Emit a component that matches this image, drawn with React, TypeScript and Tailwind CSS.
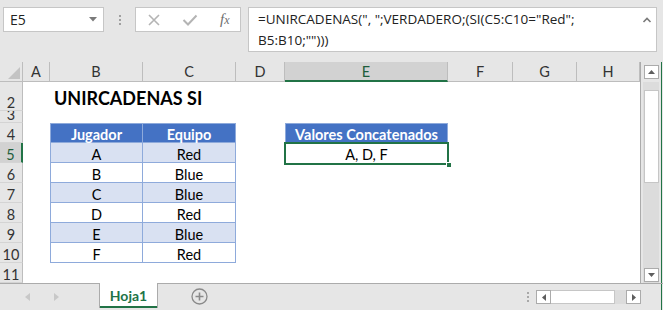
import React from 'react';

const cellFont = { fontFamily: 'Lato, "Open Sans", sans-serif' };
const uiFont = { fontFamily: '"Open Sans", "Noto Sans", sans-serif' };

const colHeaders = [
  { label: 'A', cls: 'col-start-2', active: false },
  { label: 'B', cls: 'col-start-3', active: false },
  { label: 'C', cls: 'col-start-4', active: false },
  { label: 'D', cls: 'col-start-5', active: false },
  { label: 'E', cls: 'col-start-6', active: true },
  { label: 'F', cls: 'col-start-7', active: false },
  { label: 'G', cls: 'col-start-8', active: false },
  { label: 'H', cls: 'col-start-9', active: false },
];

const rowHeaders = [
  { label: '2', cls: 'row-start-2', active: false },
  { label: '3', cls: 'row-start-3', active: false },
  { label: '4', cls: 'row-start-4', active: false },
  { label: '5', cls: 'row-start-5', active: true },
  { label: '6', cls: 'row-start-6', active: false },
  { label: '7', cls: 'row-start-7', active: false },
  { label: '8', cls: 'row-start-8', active: false },
  { label: '9', cls: 'row-start-9', active: false },
  { label: '10', cls: 'row-start-10', active: false },
  { label: '11', cls: 'row-start-11', active: false },
];

const tableRows = [
  { jugador: 'A', equipo: 'Red', row: 'row-start-5', band: true },
  { jugador: 'B', equipo: 'Blue', row: 'row-start-6', band: false },
  { jugador: 'C', equipo: 'Blue', row: 'row-start-7', band: true },
  { jugador: 'D', equipo: 'Red', row: 'row-start-8', band: false },
  { jugador: 'E', equipo: 'Blue', row: 'row-start-9', band: true },
  { jugador: 'F', equipo: 'Red', row: 'row-start-10', band: false },
];

const FormulaBar = () => (
  <div className="h-[62px] flex items-start pt-[7px] pl-[3px] bg-[#e6e6e6]" style={uiFont}>
    <div className="w-[101px] h-[25px] bg-white border border-[#c6c6c6] flex items-center justify-between pl-[6px] pr-[6px] text-[14px] text-[#222]">
      <span>E5</span>
      <svg width="8" height="5" viewBox="0 0 8 5">
        <path d="M0 0 L8 0 L4 4.5 Z" fill="#7a7a7a" />
      </svg>
    </div>
    <div className="w-[31px] h-[25px] flex flex-col items-center justify-center gap-[2px]">
      <span className="w-[2px] h-[2px] bg-[#a0a0a0]" />
      <span className="w-[2px] h-[2px] bg-[#a0a0a0]" />
      <span className="w-[2px] h-[2px] bg-[#a0a0a0]" />
    </div>
    <div className="w-[106px] h-[25px] bg-white border border-[#c6c6c6] flex items-center pl-[10px]">
      <svg width="14" height="14" viewBox="0 0 14 14" className="ml-[1px]">
        <path d="M2 2 L12 12 M12 2 L2 12" stroke="#b4b4b4" strokeWidth="1.6" />
      </svg>
      <svg width="16" height="14" viewBox="0 0 16 14" className="ml-[21px]">
        <path d="M1.5 7 L6 11.5 L14.5 2.5" stroke="#b4b4b4" strokeWidth="2" fill="none" />
      </svg>
      <span className="ml-[22px] text-[15px] italic text-[#6e6e6e] leading-none" style={{ fontFamily: '"Liberation Serif", serif' }}>
        f<span className="text-[12px]">x</span>
      </span>
    </div>
    <div className="ml-[7px] w-[409px] h-[45px] bg-white border border-[#c6c6c6] flex justify-between pl-[9px] pr-[4px] pt-[1px]">
      <div className="text-[13.5px] leading-[20.5px] text-[#222]">
        <div>=UNIRCADENAS(", ";VERDADERO;(SI(C5:C10="Red";</div>
        <div>B5:B10;"")))</div>
      </div>
      <svg width="10" height="8" viewBox="0 0 10 8" className="mt-[7px]">
        <path d="M1.5 6 L5 2.5 L8.5 6" stroke="#7a7a7a" strokeWidth="1.6" fill="none" />
      </svg>
    </div>
  </div>
);

const Sheet = () => (
  <div className="w-[641px] border-r border-[#ababab] bg-white" style={cellFont}>
    <div className="grid grid-cols-[23px_27px_93px_93px_49px_163px_65px_64px_63px] grid-rows-[20px_29px_12px_20px_20px_20px_20px_20px_20px_20px_20px] text-[14.5px] text-black">
      <div className="col-start-1 row-start-1 bg-[#e6e6e6] border-r border-b border-[#bdbdbd] flex items-end justify-end pr-[2px] pb-[2px]">
        <svg width="12" height="12" viewBox="0 0 12 12">
          <path d="M12 0 L12 12 L0 12 Z" fill="#c3c3c3" />
        </svg>
      </div>
      {colHeaders.map((c) => (
        <div
          key={c.label}
          className={`${c.cls} row-start-1 flex items-center justify-center pt-[1px] border-r ${
            c.active
              ? 'bg-[#d2d2d2] border-b-2 border-b-[#217346] border-r-[#bdbdbd] text-[#1e5e3b]'
              : 'bg-[#e6e6e6] border-b border-[#bdbdbd] text-[#333]'
          }`}
        >
          {c.label}
        </div>
      ))}
      {rowHeaders.map((r) => (
        <div
          key={r.label}
          className={`col-start-1 ${r.cls} overflow-hidden flex items-end justify-center leading-[15px] ${
            r.active
              ? 'bg-[#d2d2d2] border-r-2 border-r-[#217346] border-b border-b-[#d4d4d4] text-[#1e5e3b]'
              : 'bg-[#e6e6e6] border-r border-r-[#bdbdbd] border-b border-b-[#d4d4d4] text-[#333]'
          }`}
        >
          {r.label}
        </div>
      ))}

      <div className="col-start-3 row-start-2 flex items-end pl-[4px] whitespace-nowrap text-[18px] font-bold leading-[25px]">
        UNIRCADENAS SI
      </div>

      <div className="col-start-3 row-start-4 bg-[#4472c4] text-white font-bold flex items-center justify-center pt-[4px] border-l border-t border-r border-b border-[#8eaadb]">
        Jugador
      </div>
      <div className="col-start-4 row-start-4 bg-[#4472c4] text-white font-bold flex items-center justify-center pt-[4px] border-t border-r border-b border-[#8eaadb]">
        Equipo
      </div>
      {tableRows.map((t) => (
        <React.Fragment key={t.jugador}>
          <div
            className={`col-start-3 ${t.row} flex items-center justify-center pt-[4px] border-l border-r border-b border-[#8eaadb] ${
              t.band ? 'bg-[#d9e1f2]' : 'bg-white'
            }`}
          >
            {t.jugador}
          </div>
          <div
            className={`col-start-4 ${t.row} flex items-center justify-center pt-[4px] border-r border-b border-[#8eaadb] ${
              t.band ? 'bg-[#d9e1f2]' : 'bg-white'
            }`}
          >
            {t.equipo}
          </div>
        </React.Fragment>
      ))}

      <div className="col-start-6 row-start-4 bg-[#4472c4] text-white font-bold flex items-center justify-center pt-[4px] border border-[#8eaadb]">
        Valores Concatenados
      </div>
      <div className="col-start-6 row-start-5 relative flex items-center justify-center pt-[4px]">
        A, D, F
        <div className="absolute -left-px -top-px -right-px -bottom-[2px] border-2 border-[#217346]" />
        <div className="absolute -right-[4px] -bottom-[5px] w-[6px] h-[6px] bg-[#217346] border border-white" />
      </div>
    </div>
  </div>
);

const VScroll = () => (
  <div className="w-[22px] flex bg-[#e6e6e6]">
    <div className="w-[2px]" />
    <div className="w-[16px] flex flex-col">
      <div className="h-[20px] flex items-start pt-[3px] justify-center">
        <div className="w-[15px] h-[14px] bg-white border border-[#ababab] flex items-center justify-center">
          <svg width="7" height="4" viewBox="0 0 7 4">
            <path d="M0 4 L3.5 0 L7 4 Z" fill="#5e5e5e" />
          </svg>
        </div>
      </div>
      <div className="flex-1 bg-[#dcdcdc] flex flex-col items-center pt-[8px] pb-[1px]">
        <div className="w-[15px] h-[93px] bg-white border border-[#c6c6c6]" />
        <div className="flex-1" />
        <div className="w-[15px] h-[14px] bg-white border border-[#ababab] flex items-center justify-center">
          <svg width="7" height="4" viewBox="0 0 7 4">
            <path d="M0 0 L7 0 L3.5 4 Z" fill="#5e5e5e" />
          </svg>
        </div>
      </div>
    </div>
    <div className="w-[2px]" />
    <div className="w-px bg-[#217346]" />
    <div className="w-px" />
  </div>
);

const TabBar = () => (
  <div className="h-[27px] flex bg-[#e6e6e6] border-t border-[#ababab]" style={uiFont}>
    <div className="w-[99px] flex items-center pl-[25px] gap-[24px] pb-[1px]">
      <svg width="5" height="8" viewBox="0 0 5 8">
        <path d="M5 0 L5 8 L0 4 Z" fill="#c8c8c8" />
      </svg>
      <svg width="5" height="8" viewBox="0 0 5 8">
        <path d="M0 0 L0 8 L5 4 Z" fill="#c8c8c8" />
      </svg>
    </div>
    <div className="-mt-px w-[59px] h-[25px] bg-white border-l border-r border-[#ababab] flex flex-col">
      <div className="flex-1 flex items-center justify-center text-[14px] font-bold text-[#217346] pt-[2px]" style={cellFont}>
        Hoja1
      </div>
      <div className="h-[2px] bg-[#217346]" />
    </div>
    <div className="w-[82px] flex items-center justify-center pb-[1px]">
      <svg width="17" height="17" viewBox="0 0 17 17">
        <circle cx="8.5" cy="8.5" r="7.5" stroke="#8a8a8a" strokeWidth="1.3" fill="none" />
        <path d="M8.5 4.5 V12.5 M4.5 8.5 H12.5" stroke="#8a8a8a" strokeWidth="1.6" />
      </svg>
    </div>
    <div className="flex-1" />
    <div className="w-[16px] flex flex-col items-center justify-center gap-[2px] pb-[1px]">
      <span className="w-[2px] h-[2px] bg-[#a8a8a8]" />
      <span className="w-[2px] h-[2px] bg-[#a8a8a8]" />
      <span className="w-[2px] h-[2px] bg-[#a8a8a8]" />
    </div>
    <div className="w-[105px] flex items-start pt-[6px]">
      <div className="w-[15px] h-[14px] bg-white border border-[#ababab] flex items-center justify-center">
        <svg width="4" height="7" viewBox="0 0 4 7">
          <path d="M4 0 L4 7 L0 3.5 Z" fill="#5e5e5e" />
        </svg>
      </div>
      <div className="w-[64px] h-[14px] bg-white border-t border-b border-r border-[#c6c6c6]" />
      <div className="w-[11px] h-[14px] bg-[#dcdcdc]" />
      <div className="w-[15px] h-[14px] bg-white border border-[#ababab] flex items-center justify-center">
        <svg width="4" height="7" viewBox="0 0 4 7">
          <path d="M0 0 L0 7 L4 3.5 Z" fill="#5e5e5e" />
        </svg>
      </div>
    </div>
    <div className="w-[22px] flex">
      <div className="w-[20px]" />
      <div className="w-px bg-[#217346]" />
    </div>
  </div>
);

export default function App() {
  return (
    <div className="w-[663px] h-[310px] overflow-hidden bg-[#e6e6e6] flex flex-col">
      <FormulaBar />
      <div className="flex h-[221px]">
        <Sheet />
        <VScroll />
      </div>
      <TabBar />
    </div>
  );
}
